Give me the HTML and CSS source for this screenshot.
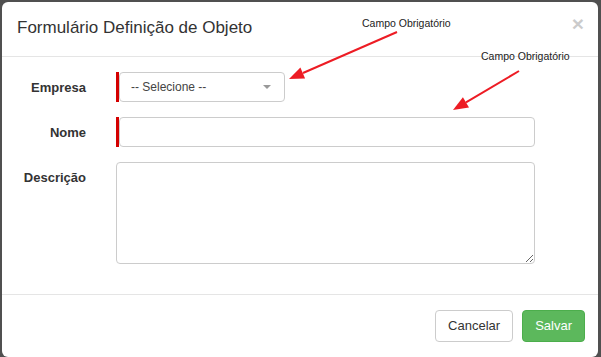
FILE: index.html
```html
<!DOCTYPE html>
<html lang="pt-BR">
<head>
    <meta charset="UTF-8">
    <meta name="viewport" content="width=device-width, initial-scale=1.0">
    <title>Formulário Definição de Objeto</title>
    <link rel="stylesheet" href="styles.css">
</head>
<body>
    <div class="modal">
        <div class="modal-header">
            <h4 class="modal-title">Formulário Definição de Objeto</h4>
            <span class="close">&times;</span>
        </div>
        <div class="modal-body">
            <form class="form-horizontal">
                <div class="form-group">
                    <label for="empresa">Empresa</label>
                    <div class="field">
                        <div class="required select-wrap">
                            <div class="select-box" id="empresa">
                                <span>-- Selecione --</span>
                                <b class="caret"></b>
                            </div>
                        </div>
                    </div>
                </div>
                <div class="form-group">
                    <label for="nome">Nome</label>
                    <div class="field">
                        <div class="required">
                            <input type="text" id="nome" class="form-control">
                        </div>
                    </div>
                </div>
                <div class="form-group">
                    <label for="descricao">Descrição</label>
                    <div class="field">
                        <textarea id="descricao" class="form-control"></textarea>
                    </div>
                </div>
            </form>
        </div>
        <div class="modal-footer">
            <button type="button" class="btn btn-default">Cancelar</button>
            <button type="button" class="btn btn-success">Salvar</button>
        </div>
    </div>

    <!-- anotações -->
    <span class="note note-1">Campo Obrigatório</span>
    <span class="note note-2">Campo Obrigatório</span>
    <svg class="arrows" width="601" height="357" viewBox="0 0 601 357">
        <line x1="397" y1="32" x2="303" y2="73" />
        <polygon points="289,79 305.1,78.5 300.4,67.5" />
        <line x1="519" y1="71" x2="466" y2="102.4" />
        <polygon points="453,110 469,107.6 462.9,97.2" />
    </svg>
</body>
</html>
```

FILE: styles.css
```css
body {
    margin: 0;
    background: #505050;
    font-family: "Liberation Sans", Arial, sans-serif;
    color: #333;
    position: relative;
    height: 357px;
    overflow: hidden;
}
.modal {
    margin: 2px 3px 0 2px;
    background: #fff;
    border-radius: 6px;
}
.modal-header {
    display: flex;
    justify-content: space-between;
    align-items: flex-start;
    padding: 14px 14px 16px 15px;
    border-bottom: 1px solid #e5e5e5;
}
.modal-title {
    margin: 0;
    font-size: 17px;
    line-height: 24px;
    font-weight: normal;
}
.close {
    font-size: 21px;
    font-weight: bold;
    line-height: 24px;
    margin-top: -4px;
    color: #000;
    opacity: .2;
}
.modal-body {
    padding: 15px 0;
}
.form-group {
    display: grid;
    grid-template-columns: 84px 419px;
    column-gap: 30px;
    margin-bottom: 15px;
}
label {
    text-align: right;
    font-size: 13px;
    font-weight: bold;
    line-height: 16px;
    padding-top: 8px;
}
.required {
    display: flex;
    border-left: 3px solid #d40000;
}
.select-wrap {
    width: fit-content;
}
.select-box {
    box-sizing: border-box;
    width: 166px;
    height: 30px;
    border: 1px solid #ccc;
    border-radius: 4px;
    padding: 0 13px 0 11px;
    display: flex;
    align-items: center;
    justify-content: space-between;
    font-size: 12px;
    color: #444;
}
.caret {
    width: 0;
    height: 0;
    border-left: 4px solid transparent;
    border-right: 4px solid transparent;
    border-top: 4px solid #999;
}
.form-control {
    box-sizing: border-box;
    border: 1px solid #ccc;
    border-radius: 4px;
    font-family: inherit;
    font-size: 13px;
    margin: 0;
}
input.form-control {
    width: 416px;
    height: 30px;
    padding: 0 10px;
}
textarea.form-control {
    display: block;
    width: 419px;
    height: 102px;
    padding: 6px 10px;
}
.modal-footer {
    display: flex;
    justify-content: flex-end;
    gap: 9px;
    padding: 15px 13px 15px;
    border-top: 1px solid #e5e5e5;
}
.btn {
    font-family: inherit;
    font-size: 13px;
    line-height: 18px;
    padding: 6px 12px;
    border: 1px solid #ccc;
    border-radius: 4px;
    background: #fff;
    color: #333;
}
.btn-success {
    background: #5cb85c;
    border-color: #4cae4c;
    color: #fff;
}
.note {
    position: absolute;
    font-size: 10.5px;
    line-height: 12px;
    color: #222;
    white-space: nowrap;
}
.note-1 {
    left: 362px;
    top: 17px;
}
.note-2 {
    left: 481px;
    top: 50px;
}
.arrows {
    position: absolute;
    left: 0;
    top: 0;
    pointer-events: none;
}
.arrows line {
    stroke: #ed1c24;
    stroke-width: 2;
}
.arrows polygon {
    fill: #ed1c24;
}
```
